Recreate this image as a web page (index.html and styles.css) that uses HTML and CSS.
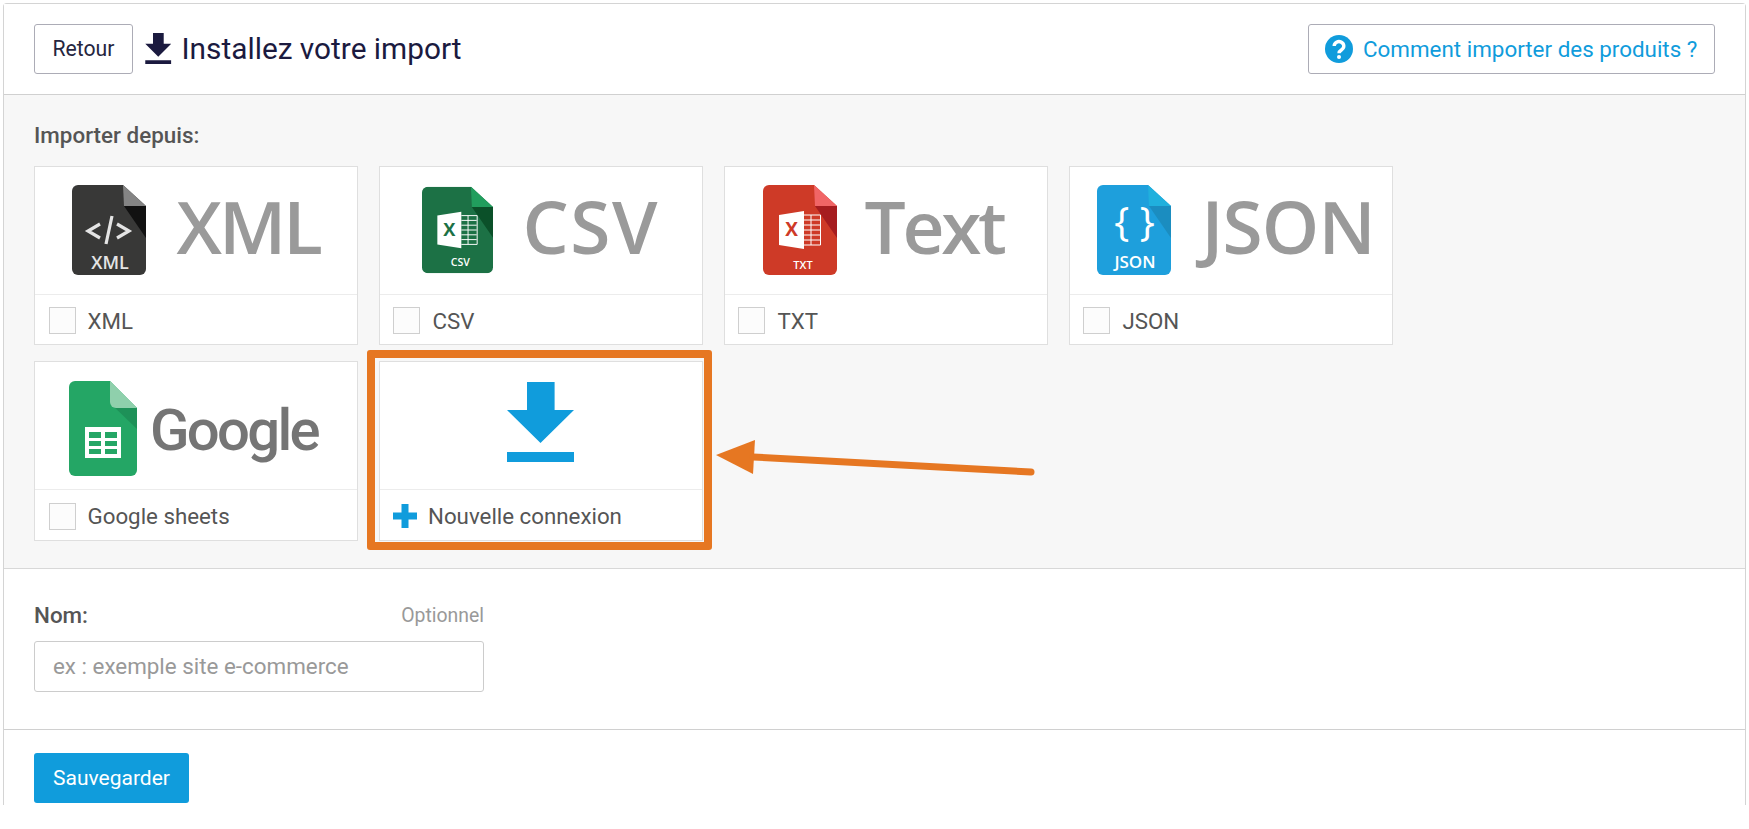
FILE: index.html
```html
<!DOCTYPE html>
<html lang="fr">
<head>
<meta charset="utf-8">
<title>Installez votre import</title>
<link rel="stylesheet" href="styles.css">
</head>
<body>
<svg class="defs" width="0" height="0" aria-hidden="true">
  <defs>
    <symbol id="dl" viewBox="0 0 67 80"><path d="M20 0H47.6V28H67L33.5 61L0 28H20ZM0 70H67V80H0Z"/></symbol>
    <symbol id="doc" viewBox="0 0 74 90"><path d="M6 0H51L74 21V84a6 6 0 0 1-6 6H6a6 6 0 0 1-6-6V6a6 6 0 0 1 6-6Z"/></symbol>
    <symbol id="sheet" viewBox="0 0 74 90">
      <path fill="#fff" d="M16 30L41 26V64L16 60Z"/>
      <path fill="none" stroke="#fff" stroke-width="1" d="M41 30H57.5V60H41M41 35H57M41 40H57M41 45H57M41 50H57M41 55H57M48 30V60"/>
    </symbol>
  </defs>
</svg>
<div class="panel">
  <header class="head">
    <a class="btn-back">Retour</a>
    <svg class="head-icon"><use href="#dl"/></svg>
    <h1 class="title">Installez votre import</h1>
    <a class="btn-help">
      <svg class="help-icon" viewBox="0 0 28 28"><circle cx="14" cy="14" r="14" fill="#109cdc"/><path fill="none" stroke="#fff" stroke-width="3.4" d="M9.2 11a4.8 4.4 0 1 1 7.6 3.6c-1.8 1.2-2.8 1.8-2.8 3.6"/><circle cx="14" cy="22" r="2" fill="#fff"/></svg>
      <span>Comment importer des produits ?</span>
    </a>
  </header>

  <section class="sources">
    <div class="section-label">Importer depuis:</div>
    <div class="grid">
      <div class="card">
        <div class="logo logo-xml">
          <svg class="doc" viewBox="0 0 74 90">
            <use href="#doc" fill="#383837"/>
            <path fill="#848484" d="M51 0L74 21H52Z"/>
            <path fill="#111" d="M52 21H74V53Z"/>
            <path fill="none" stroke="#e4e4e4" stroke-width="3.2" d="M28 39L16 46L28 53M34 59L40 31M45 39L57 46L45 53"/>
            <text class="doc-label" x="38" y="84" font-size="18" fill="#e4e4e4">XML</text>
          </svg>
          <span class="word word-xml">XML</span>
        </div>
        <label class="foot"><span class="check"></span>XML</label>
      </div>
      <div class="card">
        <div class="logo logo-csv">
          <svg class="doc narrow" viewBox="0 0 74 90">
            <use href="#doc" fill="#1c7145"/>
            <path fill="#219e5d" d="M51 0L74 21H52Z"/>
            <path fill="#0b5029" d="M52 21H74V53Z"/>
            <use href="#sheet" width="74" height="90"/>
            <text class="doc-x" x="28.500" y="51" font-size="19" fill="#1c7145">X</text>
            <text class="doc-label" x="40" y="83" font-size="11" fill="#fff">CSV</text>
          </svg>
          <span class="word word-csv">CSV</span>
        </div>
        <label class="foot"><span class="check"></span>CSV</label>
      </div>
      <div class="card">
        <div class="logo logo-txt">
          <svg class="doc" viewBox="0 0 74 90">
            <use href="#doc" fill="#ce3a27"/>
            <path fill="#f16566" d="M51 0L74 21H52Z"/>
            <path fill="#a61c1f" d="M52 21H74V53Z"/>
            <use href="#sheet" width="74" height="90"/>
            <text class="doc-x" x="28.500" y="51" font-size="19" fill="#ce3a27">X</text>
            <text class="doc-label" x="40" y="84" font-size="11" fill="#fff">TXT</text>
          </svg>
          <span class="word word-txt">Text</span>
        </div>
        <label class="foot"><span class="check"></span>TXT</label>
      </div>
      <div class="card">
        <div class="logo logo-json">
          <svg class="doc" viewBox="0 0 74 90">
            <use href="#doc" fill="#1e9fdc"/>
            <path fill="#20b0dd" d="M51 0L74 21H52Z"/>
            <path fill="#1b8dc0" d="M52 21H74V53Z"/>
            <text class="doc-brace" x="37.500" y="51" font-size="40" fill="#fff">{ }</text>
            <text class="doc-label" x="38" y="83" font-size="17" fill="#fff">JSON</text>
          </svg>
          <span class="word word-json">JSON</span>
        </div>
        <label class="foot"><span class="check"></span>JSON</label>
      </div>
      <div class="card">
        <div class="logo logo-google">
          <svg class="doc-g" viewBox="0 0 68 95">
            <path fill="#24a665" d="M6 0H41L68 27V89a6 6 0 0 1-6 6H6a6 6 0 0 1-6-6V6a6 6 0 0 1 6-6Z"/>
            <path fill="#1e9158" d="M43 22L68 27V48L41 22Z"/>
            <path fill="#8fd0ac" d="M41 0L68 27H47a6 6 0 0 1-6-6Z"/>
            <rect fill="#fff" x="16" y="46" width="36" height="31"/>
            <path fill="#24a665" d="M20 51h12v6H20ZM36 51h12v6H36ZM20 60h12v5H20ZM36 60h12v5H36ZM20 68h12v5H20ZM36 68h12v5H36Z"/>
          </svg>
          <span class="word word-google">Google</span>
        </div>
        <label class="foot"><span class="check"></span>Google sheets</label>
      </div>
      <div class="card card-new">
        <div class="logo logo-new"><svg class="new-icon"><use href="#dl"/></svg></div>
        <div class="foot foot-new">
          <svg class="plus" viewBox="0 0 24 24"><path d="M8.500 0H15.500V8.500H24V15.500H15.500V24H8.500V15.500H0V8.500H8.500Z"/></svg>
          Nouvelle connexion
        </div>
        <div class="highlight"></div>
      </div>
    </div>
    <svg class="pointer" viewBox="0 0 325 40" width="325" height="40">
      <path fill="#e67722" d="M0 19L39 4L37 38Z"/>
      <path fill="none" stroke="#e67722" stroke-width="7" stroke-linecap="round" d="M37 21L315 36"/>
    </svg>
  </section>

  <section class="name-row">
    <div class="field">
      <div class="field-top"><span class="field-label">Nom:</span><span class="optional">Optionnel</span></div>
      <input class="input" type="text" placeholder="ex : exemple site e-commerce">
    </div>
  </section>

  <footer class="actions"><a class="btn-save">Sauvegarder</a></footer>
</div>
</body>
</html>
```
FILE: styles.css
```css
* { box-sizing: border-box; }
html, body { margin: 0; padding: 0; background: #fff; }
body { font-family: Roboto, "Liberation Sans", sans-serif; color: #555; font-size: 22.300px; overflow: hidden; height: 829px; }
.defs { position: absolute; }

.panel {
  margin: 3px 3px 0 3px;
  height: 802px;
  border: 1.5px solid #d4d4d4;
  border-bottom: 0;
  border-radius: 4px 4px 0 0;
  display: flex;
  flex-direction: column;
}

.head {
  height: 90.500px;
  flex: none;
  display: flex;
  align-items: center;
  padding: 0 30px 0 30px;
  border-bottom: 1.5px solid #d0d0d0;
  background: #fff;
}
.btn-back {
  width: 99px; height: 49.500px;
  display: flex; align-items: center; justify-content: center;
  border: 1.5px solid #acacb6;
  border-radius: 3px;
  color: #26263f;
  font-size: 21.200px;
}
.head-icon { width: 26.500px; height: 31px; fill: #1b1a3f; margin-left: 12px; }
.title { margin: 0 0 0 10px; font-size: 29.800px; font-weight: 400; color: #1b1a3f; }
.btn-help {
  margin-left: auto;
  height: 50.500px;
  width: 407px;
  display: flex; align-items: center; gap: 10px;
  padding-left: 16px;
  border: 1.5px solid #acacb6;
  border-radius: 3px;
  color: #109cdc;
  font-size: 22.400px;
}
.help-icon { width: 28px; height: 28px; flex: none; }

.sources {
  position: relative;
  flex: none;
  height: 474px;
  background: #f7f7f7;
  border-bottom: 1.5px solid #d8d8d8;
  padding: 29px 0 0 30px;
}
.section-label { font-weight: 500; font-size: 22.400px; line-height: 22px; color: #555; }
.grid {
  display: grid;
  grid-template-columns: repeat(4, 323.600px);
  grid-auto-rows: 179.500px;
  column-gap: 21.400px;
  row-gap: 16px;
  margin-top: 20px;
}
.card {
  position: relative;
  background: #fff;
  border: 1.500px solid #dfdfdf;
  display: flex;
  flex-direction: column;
}
.logo {
  height: 128px;
  flex: none;
  display: flex;
  align-items: flex-start;
  border-bottom: 1px solid #ececec;
}
.doc { width: 74px; height: 90px; margin-top: 18.500px; flex: none; }
.doc.narrow { width: 71px; }
.doc-g { width: 68px; height: 95px; margin-top: 18.500px; flex: none; }
.doc-label { font-family: "Open Sans", sans-serif; font-weight: 600; text-anchor: middle; }
.doc-x { font-family: "Open Sans", sans-serif; font-weight: 700; text-anchor: middle; }
.doc-brace { font-family: "Open Sans", sans-serif; font-weight: 400; text-anchor: middle; }
.word {
  font-family: "Open Sans", sans-serif;
  font-weight: 650;
  color: #9a9a9a;
  font-size: 73px;
  line-height: 100px;
  margin-top: 9px;
  white-space: nowrap;
}
.logo-xml { padding-left: 37px; }
.word-xml { margin-left: 30.500px; letter-spacing: -3px; }
.logo-csv { padding-left: 42px; }
.word-csv { margin-left: 29.500px; letter-spacing: 1.500px; }
.logo-txt { padding-left: 38px; }
.word-txt { margin-left: 27.500px; letter-spacing: -3.300px; }
.logo-json { padding-left: 27px; }
.word-json { margin-left: 30.500px; font-weight: 550; letter-spacing: -0.800px; }
.logo-google { padding-left: 34px; }
.word-google { font-family: Roboto, sans-serif; margin-left: 13px; font-weight: 500; color: #757575; font-size: 58px; margin-top: 18px; letter-spacing: -2.700px; }
.logo-new { justify-content: center; }
.new-icon { width: 67px; height: 80px; fill: #109cdc; margin-top: 20px; margin-right: 1px; }

.foot {
  flex: 1;
  display: flex;
  align-items: center;
  padding: 3px 0 0 13.500px;
  color: #555;
  font-size: 22.300px;
}
.check {
  width: 27px; height: 27px;
  border: 1px solid #cfcfcf;
  background: #fcfcfc;
  margin-right: 12px;
  flex: none;
}
.foot-new { padding-left: 13.500px; }
.plus { width: 24px; height: 24px; fill: #109cdc; margin-right: 10.500px; flex: none; }

.highlight {
  position: absolute;
  left: -12.500px; top: -12.500px; right: -10px; bottom: -10px;
  border: 8.500px solid #e67722;
  border-radius: 3px;
}
.pointer { position: absolute; left: 712px; top: 341px; }

.name-row { flex: none; height: 161px; background: #fff; border-bottom: 1.5px solid #d0d0d0; padding: 33px 0 0 30px; }
.field { width: 450px; }
.field-top { display: flex; justify-content: space-between; align-items: center; height: 26px; margin-bottom: 13px; }
.field-label { font-weight: 500; color: #555; font-size: 22.400px; }
.optional { color: #999; font-size: 19.400px; padding-top: 1px; }
.input {
  display: block;
  width: 100%;
  height: 51px;
  border: 1.5px solid #ccc;
  border-radius: 3px;
  padding: 0 18px;
  font-family: Roboto, sans-serif;
  font-size: 22.400px;
  background: #fff;
}
.input::placeholder { color: #999; opacity: 1; }

.actions { flex: 1; padding: 23px 0 0 30px; background: #fff; }
.btn-save {
  display: flex; align-items: center; justify-content: center;
  width: 155px; height: 50px;
  background: #109cdc;
  color: #fff;
  border-radius: 3px;
  font-size: 21px;
  font-weight: 400;
}
```
